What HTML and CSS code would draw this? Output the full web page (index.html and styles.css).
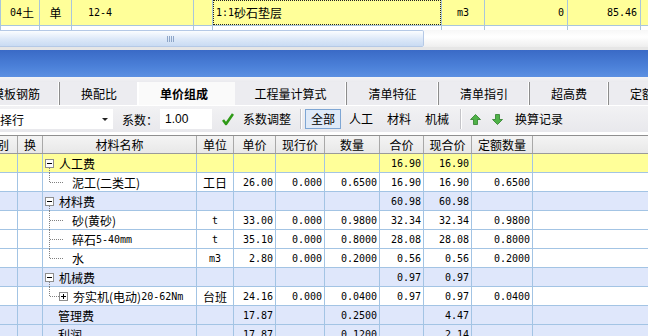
FILE: index.html
```html
<!DOCTYPE html>
<html lang="zh-CN">
<head>
    <meta charset="UTF-8">
    <title>单价组成</title>
    <link rel="stylesheet" href="styles.css">
</head>
<body>
    <div class="plan">
        <div class="row cur">
            <div class="n">04<span class="cn">土</span></div>
            <div class="cn mid">单</div>
            <div class="n code">12-4</div>
            <div></div>
            <div class="focus"><span class="n">1:1</span><span class="cn">砂石垫层</span></div>
            <div class="n mid">m3</div>
            <div class="n num">0</div>
            <div class="n num">85.46</div>
            <div></div>
        </div>
        <div class="row stub">
            <div></div><div></div><div></div><div></div><div></div><div></div><div></div><div></div><div></div>
        </div>
    </div>

    <div class="hscroll">
        <div class="thumb"><span class="grip"></span></div>
        <div class="track"></div>
    </div>
    <div class="band"></div>
    <div class="caption"></div>
    <div class="band2"></div>

    <div class="tabs">
        <div class="tab t1">模板钢筋</div>
        <div class="tab t2">换配比</div>
        <div class="tab t3 active">单价组成</div>
        <div class="tab t4">工程量计算式</div>
        <div class="tab t5">清单特征</div>
        <div class="tab t6">清单指引</div>
        <div class="tab t7">超高费</div>
        <div class="tab t8">定额调整</div>
    </div>

    <div class="toolbar">
        <div class="combo"><span>选择行</span><span class="drop"></span></div>
        <span class="label">系数：</span>
        <div class="input">1.00</div>
        <svg class="icon check" width="12" height="13" viewBox="0 0 12 13">
            <path d="M1 7 L4 11 L11 1" fill="none" stroke="#2f9a17" stroke-width="2.6" stroke-linejoin="round"/>
        </svg>
        <span class="btn first">系数调整</span>
        <span class="sep"></span>
        <span class="btn on">全部</span>
        <span class="btn">人工</span>
        <span class="btn">材料</span>
        <span class="btn">机械</span>
        <span class="sep"></span>
        <svg class="icon up" width="11" height="11" viewBox="0 0 11 11">
            <path d="M5.5 0.5 L10.5 5.5 L7.5 5.5 L7.5 10.5 L3.5 10.5 L3.5 5.5 L0.5 5.5 Z" fill="#4fb248" stroke="#2e7f2a" stroke-width="0.8"/>
        </svg>
        <svg class="icon down" width="11" height="11" viewBox="0 0 11 11">
            <path d="M5.5 10.5 L10.5 5.5 L7.5 5.5 L7.5 0.5 L3.5 0.5 L3.5 5.5 L0.5 5.5 Z" fill="#4fb248" stroke="#2e7f2a" stroke-width="0.8"/>
        </svg>
        <span class="btn last">换算记录</span>
    </div>

    <div class="detail">
        <div class="head">
            <div>类别</div><div>换</div><div>材料名称</div><div>单位</div><div>单价</div>
            <div>现行价</div><div>数量</div><div>合价</div><div>现合价</div><div>定额数量</div><div></div>
        </div>
        <div class="body">
            <div class="row yellow">
                <div></div><div></div>
                <div class="tree open"><span class="pm"></span>人工费</div>
                <div></div><div></div><div></div><div></div>
                <div class="num">16.90</div><div class="num">16.90</div><div></div><div></div>
            </div>
            <div class="row">
                <div></div><div></div>
                <div class="tree last">泥工(二类工)</div>
                <div class="mid">工日</div><div class="num">26.00</div><div class="num">0.000</div><div class="num">0.6500</div>
                <div class="num">16.90</div><div class="num">16.90</div><div class="num">0.6500</div><div></div>
            </div>
            <div class="row blue">
                <div></div><div></div>
                <div class="tree open"><span class="pm"></span>材料费</div>
                <div></div><div></div><div></div><div></div>
                <div class="num">60.98</div><div class="num">60.98</div><div></div><div></div>
            </div>
            <div class="row">
                <div></div><div></div>
                <div class="tree">砂(黄砂)</div>
                <div class="mid n">t</div><div class="num">33.00</div><div class="num">0.000</div><div class="num">0.9800</div>
                <div class="num">32.34</div><div class="num">32.34</div><div class="num">0.9800</div><div></div>
            </div>
            <div class="row">
                <div></div><div></div>
                <div class="tree">碎石<span class="n">5-40mm</span></div>
                <div class="mid n">t</div><div class="num">35.10</div><div class="num">0.000</div><div class="num">0.8000</div>
                <div class="num">28.08</div><div class="num">28.08</div><div class="num">0.8000</div><div></div>
            </div>
            <div class="row">
                <div></div><div></div>
                <div class="tree last">水</div>
                <div class="mid n">m3</div><div class="num">2.80</div><div class="num">0.000</div><div class="num">0.2000</div>
                <div class="num">0.56</div><div class="num">0.56</div><div class="num">0.2000</div><div></div>
            </div>
            <div class="row blue">
                <div></div><div></div>
                <div class="tree open"><span class="pm"></span>机械费</div>
                <div></div><div></div><div></div><div></div>
                <div class="num">0.97</div><div class="num">0.97</div><div></div><div></div>
            </div>
            <div class="row">
                <div></div><div></div>
                <div class="tree last sub"><span class="pm plus"></span>夯实机(电动)<span class="n">20-62Nm</span></div>
                <div class="mid">台班</div><div class="num">24.16</div><div class="num">0.000</div><div class="num">0.0400</div>
                <div class="num">0.97</div><div class="num">0.97</div><div class="num">0.0400</div><div></div>
            </div>
            <div class="row blue">
                <div></div><div></div>
                <div class="tree flat">管理费</div>
                <div></div><div class="num">17.87</div><div></div><div class="num">0.2500</div>
                <div></div><div class="num">4.47</div><div></div><div></div>
            </div>
            <div class="row blue">
                <div></div><div></div>
                <div class="tree flat">利润</div>
                <div></div><div class="num">17.87</div><div></div><div class="num">0.1200</div>
                <div></div><div class="num">2.14</div><div></div><div></div>
            </div>
        </div>
    </div>
</body>
</html>
```

FILE: styles.css
```css
body {
    margin: 0;
    width: 648px;
    height: 336px;
    overflow: hidden;
    background: #ffffff;
    font-family: "Noto Sans CJK SC", sans-serif;
    font-size: 12px;
    color: #000000;
}
.n, .num {
    font-family: "DejaVu Sans Mono", monospace;
    font-size: 10px;
}
.cn {
    font-family: "Noto Sans CJK SC", sans-serif;
    font-size: 12px;
}
.mid {
    text-align: center;
    justify-content: center;
}
.num {
    text-align: right;
    justify-content: flex-end;
    padding-right: 2px;
}

/* upper grid (list of items) */
.plan {
    display: grid;
    grid-template-columns: 38px 31px 121px 18px 228px 42px 82px 72px 1fr;
    grid-template-rows: 25px 4px;
    gap: 1px;
    padding-left: 1px;
    background: #a9c6dc;
    height: 30px;
}
.plan .row {
    display: contents;
}
.plan .row > div {
    display: flex;
    align-items: center;
    overflow: hidden;
    white-space: nowrap;
}
.plan .cur > div {
    background: #ffff99;
}
.plan .stub > div {
    background: #ffffff;
}
.plan .cur > div:first-child {
    padding-left: 9px;
}
.plan .code {
    padding-left: 16px;
}
.plan .focus {
    border: 1px dotted #222222;
    padding-left: 2px;
}
.plan .num {
    padding-right: 3px;
}

.hscroll {
    display: flex;
    height: 17px;
}
.hscroll .thumb {
    width: 424px;
    border: 1px solid #b5c9e6;
    border-left: none;
    border-radius: 0 2px 2px 0;
    background: linear-gradient(#fbfdff, #dce8f8 55%, #c9dbf3);
    display: flex;
    align-items: center;
    justify-content: center;
    box-sizing: border-box;
}
.hscroll .grip {
    width: 7px;
    height: 6px;
    margin-left: -82px;
    background: repeating-linear-gradient(90deg, #8ea6c8 0 1px, transparent 1px 2px);
}
.hscroll .track {
    flex: 1;
    background: linear-gradient(#f7f7f7, #ffffff 40%, #eeeeee);
}
.band {
    height: 3px;
    background: #e6e6e6;
}
.caption {
    height: 27px;
    background: linear-gradient(#3a6ac6, #4b80d8 60%, #5c90e2);
}
.band2 {
    height: 5px;
    background: linear-gradient(#f4f4f6, #eaeaee);
}

/* tab strip */
.tabs {
    display: flex;
    height: 24px;
    margin-left: -27px;
    background: #ececf0;
    border-bottom: 1px solid #ffffff;
    box-sizing: border-box;
}
.tab {
    flex: none;
    display: flex;
    align-items: center;
    justify-content: center;
    border-right: 1px solid #8c8c8c;
    box-shadow: inset -1px 0 0 #ffffff;
    white-space: nowrap;
}
.t1 { width: 86px; }
.t2 { width: 78px; }
.t3 { width: 96px; }
.t4 { width: 111px; }
.t5 { width: 91px; }
.t6 { width: 90px; }
.t7 { width: 78px; }
.t8 { width: 90px; }
.tab.active {
    background: #fafafa;
    font-weight: bold;
    border-right: none;
    box-shadow: none;
    padding-right: 6px;
    box-sizing: border-box;
}
.t2 {
    border-right: 1px solid #ffffff;
}

/* toolbar */
.toolbar {
    display: flex;
    align-items: center;
    height: 26px;
    background: linear-gradient(#f2f2f4, #e8e8ec);
    white-space: nowrap;
}
.combo {
    display: flex;
    align-items: center;
    justify-content: space-between;
    flex: none;
    width: 127px;
    height: 20px;
    margin-left: -14px;
    padding-left: 2px;
    box-sizing: border-box;
    background: #ffffff;
}
.combo .drop {
    width: 0;
    height: 0;
    margin-right: 5px;
    border-left: 3px solid transparent;
    border-right: 3px solid transparent;
    border-top: 3px solid #222222;
}
.toolbar .label {
    margin-left: 9px;
    width: 36px;
}
.toolbar .input {
    flex: none;
    width: 52px;
    height: 20px;
    margin-left: 2px;
    padding-left: 5px;
    box-sizing: border-box;
    background: #ffffff;
    font-family: "Liberation Sans", sans-serif;
    font-size: 12px;
    line-height: 20px;
}
.toolbar .icon {
    flex: none;
}
.toolbar .check {
    margin-left: 10px;
}
.toolbar .btn {
    padding: 0 7px;
    height: 20px;
    line-height: 20px;
}
.toolbar .btn.first {
    margin-left: 4px;
    padding: 0 5px;
}
.toolbar .sep {
    flex: none;
    width: 1px;
    height: 20px;
    background: #c4c4c8;
    border-right: 1px solid #ffffff;
    margin: 0 3px 0 5px;
}
.toolbar .btn.on {
    border: 1px solid #7ea6d4;
    background: #dfeaf8;
    padding: 0 5px;
    margin-right: 3px;
    box-sizing: border-box;
    line-height: 18px;
}
.toolbar .btn.on + .btn {
    margin-left: -2px;
}
.toolbar .btn + .sep {
    margin-left: 4px;
}
.toolbar .icon.up {
    margin-left: 5px;
}
.toolbar .icon.down {
    margin-left: 11px;
}
.toolbar .btn.last {
    margin-left: 7px;
    padding: 0 5px;
}

/* detail grid */
.detail {
    margin-top: 3px;
    margin-left: -23px;
}
.head, .body .row {
    display: grid;
    grid-template-columns: 40px 24px 153px 36px 41px 48px 54px 43px 47px 60px 140px;
    column-gap: 1px;
}
.head {
    height: 17px;
    border-top: 1px solid #8f8f8f;
    border-bottom: 1px solid #9a9a9a;
    background: #a8a8a8;
}
.head > div {
    display: flex;
    align-items: center;
    justify-content: center;
    background: linear-gradient(#f4f4f4, #e8e8e8);
    white-space: nowrap;
    overflow: hidden;
}
.body {
    background: #a3c4e4;
    display: flex;
    flex-direction: column;
    gap: 1px;
}
.body .row {
    height: 18px;
    background: #a3c4e4;
}
.body .row > div {
    display: flex;
    align-items: center;
    background: #ffffff;
    white-space: nowrap;
    overflow: hidden;
}
.body .yellow > div {
    background: #ffff99;
}
.body .blue > div {
    background: #dfe7fb;
}

/* tree column */
.tree {
    position: relative;
    padding-left: 29px;
    overflow: visible !important;
}
.tree.open {
    padding-left: 2px;
}
.tree.flat {
    padding-left: 15px;
}
.tree.sub {
    padding-left: 16px;
}
.tree .pm {
    position: relative;
    width: 7px;
    height: 7px;
    margin-right: 5px;
    border: 1px solid #8e8e8e;
    background: #ffffff;
    flex: none;
}
.tree .pm::before {
    content: "";
    position: absolute;
    left: 1px;
    top: 3px;
    width: 5px;
    height: 1px;
    background: #000000;
}
.tree .pm.plus::after {
    content: "";
    position: absolute;
    left: 3px;
    top: 1px;
    width: 1px;
    height: 5px;
    background: #000000;
}
.tree.open::after {
    content: "";
    position: absolute;
    left: 6px;
    top: 14px;
    height: 5px;
    border-left: 1px dotted #808080;
}
.tree:not(.open):not(.flat)::before {
    content: "";
    position: absolute;
    left: 6px;
    top: -1px;
    height: 20px;
    border-left: 1px dotted #808080;
}
.tree.last::before {
    height: 10px !important;
}
.tree:not(.open):not(.flat)::after {
    content: "";
    position: absolute;
    left: 7px;
    top: 9px;
    width: 13px;
    border-top: 1px dotted #808080;
}
.tree.sub::after {
    width: 9px !important;
}
```
